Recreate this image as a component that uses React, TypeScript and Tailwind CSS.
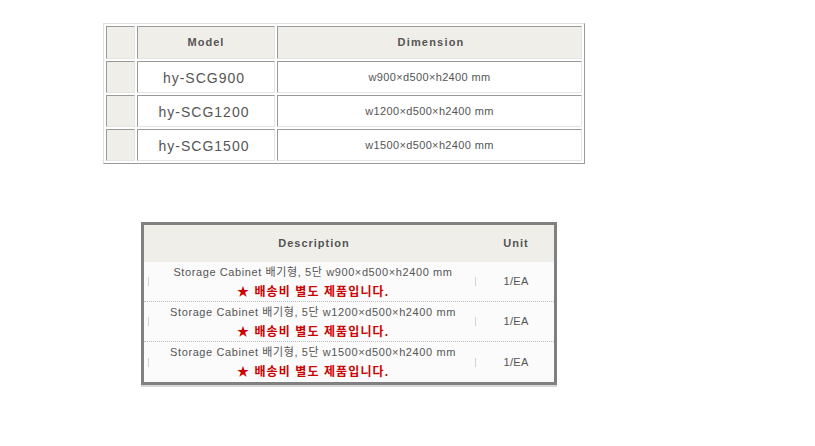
import React from "react";

const font = { fontFamily: '"Liberation Sans", "Noto Sans CJK KR", sans-serif' };

const models = [
  { name: "hy-SCG900", dim: "w900×d500×h2400 mm" },
  { name: "hy-SCG1200", dim: "w1200×d500×h2400 mm" },
  { name: "hy-SCG1500", dim: "w1500×d500×h2400 mm" },
];

const cell =
  "border border-t-[#9a9a9a] border-l-[#9a9a9a] border-r-[#e4e4e4] border-b-[#e4e4e4] p-0 text-center";

function ModelTable() {
  return (
    <table className="border-separate border-spacing-[2px] border border-t-[#e0e0e0] border-l-[#e0e0e0] border-r-[#9a9a9a] border-b-[#9a9a9a] w-[482px]">
      <tbody>
        <tr className="h-[33px]">
          <td className={`${cell} w-[29px] bg-[#efeee9]`}></td>
          <td className={`${cell} w-[138px] bg-[#efeee9] text-[11px] font-bold tracking-[1px] text-[#555]`}>Model</td>
          <td className={`${cell} bg-[#efeee9] text-[11px] font-bold tracking-[1.2px] text-[#555] pl-[3px]`}>Dimension</td>
        </tr>
        {models.map((m) => (
          <tr key={m.name} className="h-[32px]">
            <td className={`${cell} bg-[#efeee9]`}></td>
            <td className={`${cell} bg-white text-[14px] tracking-[1px] text-[#555] pt-[2px] pr-[4px]`}>{m.name}</td>
            <td className={`${cell} bg-white text-[11px] tracking-[0.35px] text-[#555]`}>{m.dim}</td>
          </tr>
        ))}
      </tbody>
    </table>
  );
}

function Tick() {
  return <span className="block w-px h-[9px] bg-[#d4d4d4]" />;
}

function DescTable() {
  return (
    <div className="w-[416px] border-[3px] border-[#808080] shadow-[0_2px_0_#d8d8d8]">
      <div className="flex h-[37px] bg-[#efeee9] text-[11px] font-bold tracking-[1px] text-[#555] items-center">
        <div className="w-[334px] text-center pl-[6px]">Description</div>
        <div className="flex-1 text-center">Unit</div>
      </div>
      {models.map((m, i) => (
        <div
          key={m.name}
          className={`flex h-[40px] bg-[#fbfbfb] items-center ${i < 2 ? "border-b border-dotted border-[#bdbdbd]" : ""}`}
        >
          <div className="w-[334px] flex items-center pl-[4px] pr-[2px] h-full">
            <Tick />
            <div className="flex-1 flex flex-col items-center leading-[20px] pl-[2px]">
              <span className="text-[11px] tracking-[0.6px] text-[#555]">Storage Cabinet 배기형, 5단 {m.dim}</span>
              <span className="text-[12px] font-bold tracking-[1.1px] text-[#cc0000]">★ 배송비 별도 제품입니다.</span>
            </div>
            <Tick />
          </div>
          <div className="flex-1 text-center text-[11px] tracking-[0.3px] text-[#555]">1/EA</div>
        </div>
      ))}
    </div>
  );
}

export default function App() {
  return (
    <div className="w-[815px] h-[446px] bg-white" style={font}>
      <div className="pt-[23px] pl-[103px]">
        <ModelTable />
      </div>
      <div className="pt-[58px] pl-[141px]">
        <DescTable />
      </div>
    </div>
  );
}
